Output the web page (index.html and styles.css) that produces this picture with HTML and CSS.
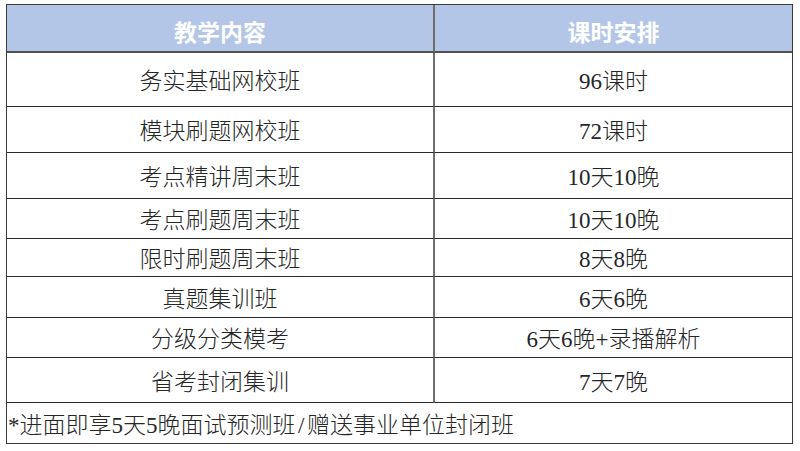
FILE: index.html
```html
<!DOCTYPE html>
<html lang="zh-CN">
<head>
<meta charset="utf-8">
<link rel="stylesheet" href="styles.css">
</head>
<body>
<div class="sheet">
  <div class="cell head">教学内容</div>
  <div class="cell head c2">课时安排</div>

  <div class="cell r1">务实基础网校班</div>
  <div class="cell r1 c2">96课时</div>

  <div class="cell r2">模块刷题网校班</div>
  <div class="cell r2 c2">72课时</div>

  <div class="cell r3">考点精讲周末班</div>
  <div class="cell r3 c2">10天10晚</div>

  <div class="cell r4">考点刷题周末班</div>
  <div class="cell r4 c2">10天10晚</div>

  <div class="cell r5">限时刷题周末班</div>
  <div class="cell r5 c2">8天8晚</div>

  <div class="cell r6">真题集训班</div>
  <div class="cell r6 c2">6天6晚</div>

  <div class="cell r7">分级分类模考</div>
  <div class="cell r7 c2">6天6晚+录播解析</div>

  <div class="cell r8">省考封闭集训</div>
  <div class="cell r8 c2">7天7晚</div>

  <div class="cell note"><span class="half">*</span>进面即享5天5晚面试预测班<span class="half">/</span>赠送事业单位封闭班</div>
</div>
</body>
</html>
```

FILE: styles.css
```css
html, body {
  margin: 0;
  padding: 0;
  background: #ffffff;
}

body {
  padding: 4px 0 0 6px;
  font-family: "Liberation Serif", "Noto Sans CJK SC", serif;
  font-size: 23px;
  font-weight: 300;
  color: #262626;
}

.sheet {
  display: grid;
  grid-template-columns: 428px 357px;
  grid-template-rows: 48px 54px 46px 46px 40px 38px 41px 40px 45px 40px;
  width: 785px;
  border: 1px solid #3a3a3a;
}

.cell {
  box-sizing: border-box;
  display: flex;
  align-items: center;
  justify-content: center;
  padding-top: 4px;
  border-bottom: 1px solid #2a2a2a;
  border-right: 2px solid #6e6e6e;
  line-height: 1;
  white-space: nowrap;
}

.cell.c2 {
  border-right: none;
}

.head {
  background: #b4c6e7;
  color: #ffffff;
  font-family: "Noto Sans CJK SC", sans-serif;
  font-weight: 700;
  font-size: 23px;
  border-bottom: 2px solid #505050;
  padding-top: 6px;
}

.note {
  grid-column: 1 / 3;
  justify-content: flex-start;
  border-right: none;
  border-bottom: none;
  padding-left: 1px;
}

.half {
  display: inline-block;
  width: 0.5em;
  text-align: center;
}
```
